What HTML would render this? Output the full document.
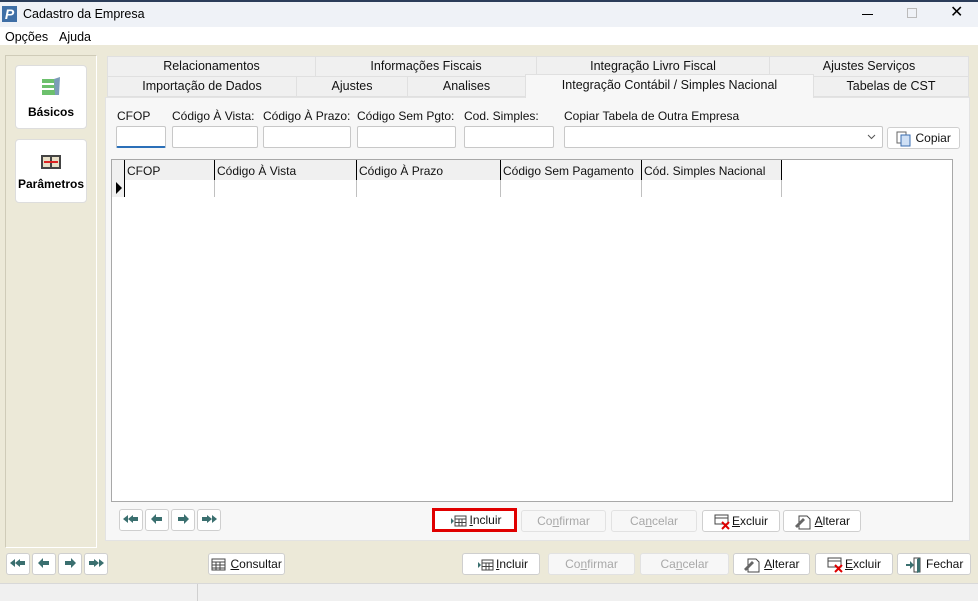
<!DOCTYPE html>
<html><head><meta charset="utf-8"><style>
*{box-sizing:border-box;margin:0;padding:0}
body{width:978px;height:601px;overflow:hidden;position:relative;background:#ece9d8;font-family:"Liberation Sans",sans-serif;font-size:12px;color:#000}
.a{position:absolute}
.tab{position:absolute;background:#f0f0f0;border:1px solid #e0e0e0;text-align:center;font-size:12.5px;line-height:19px;color:#111}
.lbl{position:absolute;font-size:12px;top:109px;color:#111}
.inp{position:absolute;top:126px;height:22px;background:#fff;border:1px solid #c8c8c8;border-radius:2px}
.btn{position:absolute;background:#fff;border:1px solid #cfcfcf;border-radius:3px;height:22px;text-align:center;line-height:20px;font-size:12px;color:#111;white-space:nowrap}
.dis{background:#f7f7f7;border-color:#e2e2e2;color:#a8a8a8}
.col{position:absolute;top:160px;height:37px;border-left:1px solid #c0c0c0}
.hd{position:absolute;top:164px;font-size:12px;color:#111}
.nav{position:absolute;width:24px;height:22px;background:#fff;border:1px solid #cfcfcf;border-radius:3px}
u{text-decoration:underline}
svg{vertical-align:middle}
</style></head><body>
<div class="a" style="left:0;top:0;width:978px;height:2px;background:#2b3d5a"></div>
<div class="a" style="left:0;top:2px;width:978px;height:25px;background:#eff2f7"></div>
<div class="a" style="left:2px;top:6px;width:15px;height:16px;background:#3f6fa6;color:#fff;font-weight:bold;font-size:14px;line-height:16px;text-align:center;font-style:italic">P</div>
<div class="a" style="left:23px;top:7px;font-size:12.5px">Cadastro da Empresa</div>
<div class="a" style="left:862px;top:14px;width:11px;height:1px;background:#000"></div>
<div class="a" style="left:907px;top:8px;width:10px;height:10px;border:1px solid #bbb"></div>
<div class="a" style="left:950px;top:5px;font-size:16px;line-height:16px">✕</div>
<div class="a" style="left:0;top:27px;width:978px;height:18px;background:#fff"></div>
<div class="a" style="left:5px;top:30px;font-size:12.5px">Opções</div>
<div class="a" style="left:59px;top:30px;font-size:12.5px">Ajuda</div>

<div class="a" style="left:5px;top:55px;width:92px;height:493px;border:1px solid #fff;border-left-color:#cfcbb8;border-top-color:#cfcbb8"></div>
<div class="a" style="left:15px;top:65px;width:72px;height:64px;background:#fff;border:1px solid #ddd;border-radius:4px;text-align:center">
<svg width="22" height="20" style="margin-top:11px"><rect x="2" y="2" width="14" height="16" fill="#6cc06c"/><rect x="2" y="6" width="12" height="2" fill="#fff"/><rect x="2" y="11" width="12" height="2" fill="#fff"/><polygon points="14,2 20,0 19,18 15,18" fill="#7c9cb8"/></svg>
<div style="font-weight:bold;font-size:12px;margin-top:8px">Básicos</div></div>
<div class="a" style="left:15px;top:139px;width:72px;height:64px;background:#fff;border:1px solid #ddd;border-radius:4px;text-align:center">
<svg width="22" height="18" style="margin-top:13px"><rect x="1" y="2" width="20" height="14" fill="#444"/><rect x="3" y="4" width="7" height="10" fill="#e8e0c8"/><rect x="12" y="4" width="7" height="10" fill="#e8e0c8"/><rect x="4" y="8" width="14" height="2" fill="#d22"/></svg>
<div style="font-weight:bold;font-size:12px;margin-top:6px">Parâmetros</div></div>

<div class="tab" style="left:107px;top:56px;width:209px;height:21px">Relacionamentos</div>
<div class="tab" style="left:315px;top:56px;width:222px;height:21px">Informações Fiscais</div>
<div class="tab" style="left:536px;top:56px;width:234px;height:21px">Integração Livro Fiscal</div>
<div class="tab" style="left:769px;top:56px;width:200px;height:21px">Ajustes Serviços</div>
<div class="tab" style="left:107px;top:76px;width:190px;height:21px">Importação de Dados</div>
<div class="tab" style="left:296px;top:76px;width:112px;height:21px">Ajustes</div>
<div class="tab" style="left:407px;top:76px;width:119px;height:21px">Analises</div>
<div class="tab" style="left:813px;top:76px;width:156px;height:21px">Tabelas de CST</div>
<div class="a" style="left:105px;top:97px;width:865px;height:444px;background:#f7f7f7;border:1px solid #e3e3e3"></div>
<div class="tab" style="left:525px;top:74px;width:289px;height:24px;background:#f7f7f7;border-bottom:none;line-height:20px">Integração Contábil / Simples Nacional</div>

<div class="lbl" style="left:117px">CFOP</div>
<div class="lbl" style="left:172px">Código À Vista:</div>
<div class="lbl" style="left:263px">Código À Prazo:</div>
<div class="lbl" style="left:357px">Código Sem Pgto:</div>
<div class="lbl" style="left:464px">Cod. Simples:</div>
<div class="lbl" style="left:564px">Copiar Tabela de Outra Empresa</div>
<div class="inp" style="left:116px;width:50px;border-bottom:2px solid #2a6fb8"></div>
<div class="inp" style="left:172px;width:86px"></div>
<div class="inp" style="left:263px;width:88px"></div>
<div class="inp" style="left:357px;width:99px"></div>
<div class="inp" style="left:464px;width:90px"></div>
<div class="inp" style="left:564px;width:319px"><svg class="a" style="right:6px;top:7px" width="9" height="6"><path d="M1 1L4.5 4.5L8 1" stroke="#555" fill="none"/></svg></div>
<div class="btn" style="left:887px;top:127px;width:73px"><svg width="16" height="16"><rect x="1" y="1" width="9" height="11" fill="#fff" stroke="#666"/><rect x="5" y="4" width="9" height="11" fill="#cfe0f5" stroke="#3a6db0"/></svg> Copiar</div>

<div class="a" style="left:111px;top:159px;width:842px;height:343px;background:#fff;border:1px solid #a8a8a8"></div>
<div class="a" style="left:112px;top:160px;width:669px;height:20px;background:#f0f0f0"></div>
<div class="a" style="left:112px;top:160px;width:12px;height:37px;background:#f0f0f0"></div>
<div class="col" style="left:124px;border-color:#000;height:37px"></div>
<div class="col" style="left:214px"></div><div class="col" style="left:356px"></div><div class="col" style="left:500px"></div><div class="col" style="left:641px"></div><div class="col" style="left:781px"></div>
<div class="a" style="left:214px;top:160px;width:1px;height:20px;background:#000"></div>
<div class="a" style="left:356px;top:160px;width:1px;height:20px;background:#000"></div>
<div class="a" style="left:500px;top:160px;width:1px;height:20px;background:#000"></div>
<div class="a" style="left:641px;top:160px;width:1px;height:20px;background:#000"></div>
<div class="a" style="left:781px;top:160px;width:1px;height:20px;background:#000"></div>
<div class="hd" style="left:127px">CFOP</div>
<div class="hd" style="left:217px">Código À Vista</div>
<div class="hd" style="left:359px">Código À Prazo</div>
<div class="hd" style="left:503px">Código Sem Pagamento</div>
<div class="hd" style="left:644px">Cód. Simples Nacional</div>
<svg class="a" style="left:116px;top:182px" width="6" height="12"><path d="M0 0L6 6L0 12Z" fill="#000"/></svg>

<div class="nav" style="left:119px;top:509px"><svg width="22" height="20"><path d="M3 9l5-4v8zM8 9l5-4v2h5v4h-5v2z" fill="#3a6f6f"/></svg></div>
<div class="nav" style="left:145px;top:509px"><svg width="22" height="20"><path d="M5 9l5-5v3h6v4h-6v3z" fill="#3a6f6f"/></svg></div>
<div class="nav" style="left:171px;top:509px"><svg width="22" height="20"><path d="M17 9l-5-5v3H6v4h6v3z" fill="#3a6f6f"/></svg></div>
<div class="nav" style="left:197px;top:509px"><svg width="22" height="20"><path d="M19 9l-5-4v8zM14 9l-5-4v2H4v4h5v2z" fill="#3a6f6f"/></svg></div>

<div class="btn" style="left:432px;top:508px;width:85px;height:24px;border:3px solid #e00000;border-radius:0;line-height:18px"><svg width="22" height="12"><path d="M1 6h3V3l3 3-3 3V6" fill="#3a6f6f"/><rect x="8" y="1" width="11" height="10" fill="#fff" stroke="#444"/><path d="M8 4h11M12 4v7M15 4v7M8 7.5h11" stroke="#444"/></svg><u>I</u>ncluir</div>
<div class="btn dis" style="left:521px;top:510px;width:85px">Co<u>n</u>firmar</div>
<div class="btn dis" style="left:611px;top:510px;width:86px">Ca<u>n</u>celar</div>
<div class="btn" style="left:702px;top:510px;width:78px"><svg width="18" height="16"><rect x="1" y="1" width="13" height="9" fill="#fff" stroke="#444"/><path d="M1 4h13" stroke="#444"/><path d="M8 8l7 7M15 8l-7 7" stroke="#d00" stroke-width="2"/></svg><u>E</u>xcluir</div>
<div class="btn" style="left:783px;top:510px;width:78px"><svg width="18" height="16"><path d="M5 2h8l3 3v10H5z" fill="#fff" stroke="#444"/><path d="M1 12l8-8 2 2-8 8z" fill="#666"/></svg> <u>A</u>lterar</div>

<div class="nav" style="left:6px;top:553px"><svg width="22" height="20"><path d="M3 9l5-4v8zM8 9l5-4v2h5v4h-5v2z" fill="#3a6f6f"/></svg></div>
<div class="nav" style="left:32px;top:553px"><svg width="22" height="20"><path d="M5 9l5-5v3h6v4h-6v3z" fill="#3a6f6f"/></svg></div>
<div class="nav" style="left:58px;top:553px"><svg width="22" height="20"><path d="M17 9l-5-5v3H6v4h6v3z" fill="#3a6f6f"/></svg></div>
<div class="nav" style="left:84px;top:553px"><svg width="22" height="20"><path d="M19 9l-5-4v8zM14 9l-5-4v2H4v4h5v2z" fill="#3a6f6f"/></svg></div>
<div class="btn" style="left:208px;top:553px;width:77px"><svg width="16" height="14"><rect x="1" y="1" width="13" height="11" fill="#fff" stroke="#444"/><path d="M1 4h13M5 4v8M9 4v8M1 7h13M1 10h13" stroke="#444"/></svg> <u>C</u>onsultar</div>
<div class="btn" style="left:462px;top:553px;width:78px"><svg width="22" height="12"><path d="M1 6h3V3l3 3-3 3V6" fill="#3a6f6f"/><rect x="8" y="1" width="11" height="10" fill="#fff" stroke="#444"/><path d="M8 4h11M12 4v7M15 4v7M8 7.5h11" stroke="#444"/></svg><u>I</u>ncluir</div>
<div class="btn dis" style="left:548px;top:553px;width:87px">Co<u>n</u>firmar</div>
<div class="btn dis" style="left:640px;top:553px;width:89px">Ca<u>n</u>celar</div>
<div class="btn" style="left:733px;top:553px;width:77px"><svg width="18" height="16"><path d="M5 2h8l3 3v10H5z" fill="#fff" stroke="#444"/><path d="M1 12l8-8 2 2-8 8z" fill="#666"/></svg> <u>A</u>lterar</div>
<div class="btn" style="left:815px;top:553px;width:78px"><svg width="18" height="16"><rect x="1" y="1" width="13" height="9" fill="#fff" stroke="#444"/><path d="M1 4h13" stroke="#444"/><path d="M8 8l7 7M15 8l-7 7" stroke="#d00" stroke-width="2"/></svg><u>E</u>xcluir</div>
<div class="btn" style="left:897px;top:553px;width:74px"><svg width="18" height="16"><path d="M9 1h6v14H9z" fill="#fff" stroke="#444"/><path d="M12 2l3-1v14l-3 1z" fill="#3a6f6f"/><path d="M1 7h4V4l4 4-4 4V9H1z" fill="#3a6f6f"/></svg> Fechar</div>

<div class="a" style="left:0;top:583px;width:978px;height:18px;background:#f0f0f0;border-top:1px solid #d8d8d8"></div>
<div class="a" style="left:197px;top:584px;width:1px;height:17px;background:#d0d0d0"></div>
</body></html>
